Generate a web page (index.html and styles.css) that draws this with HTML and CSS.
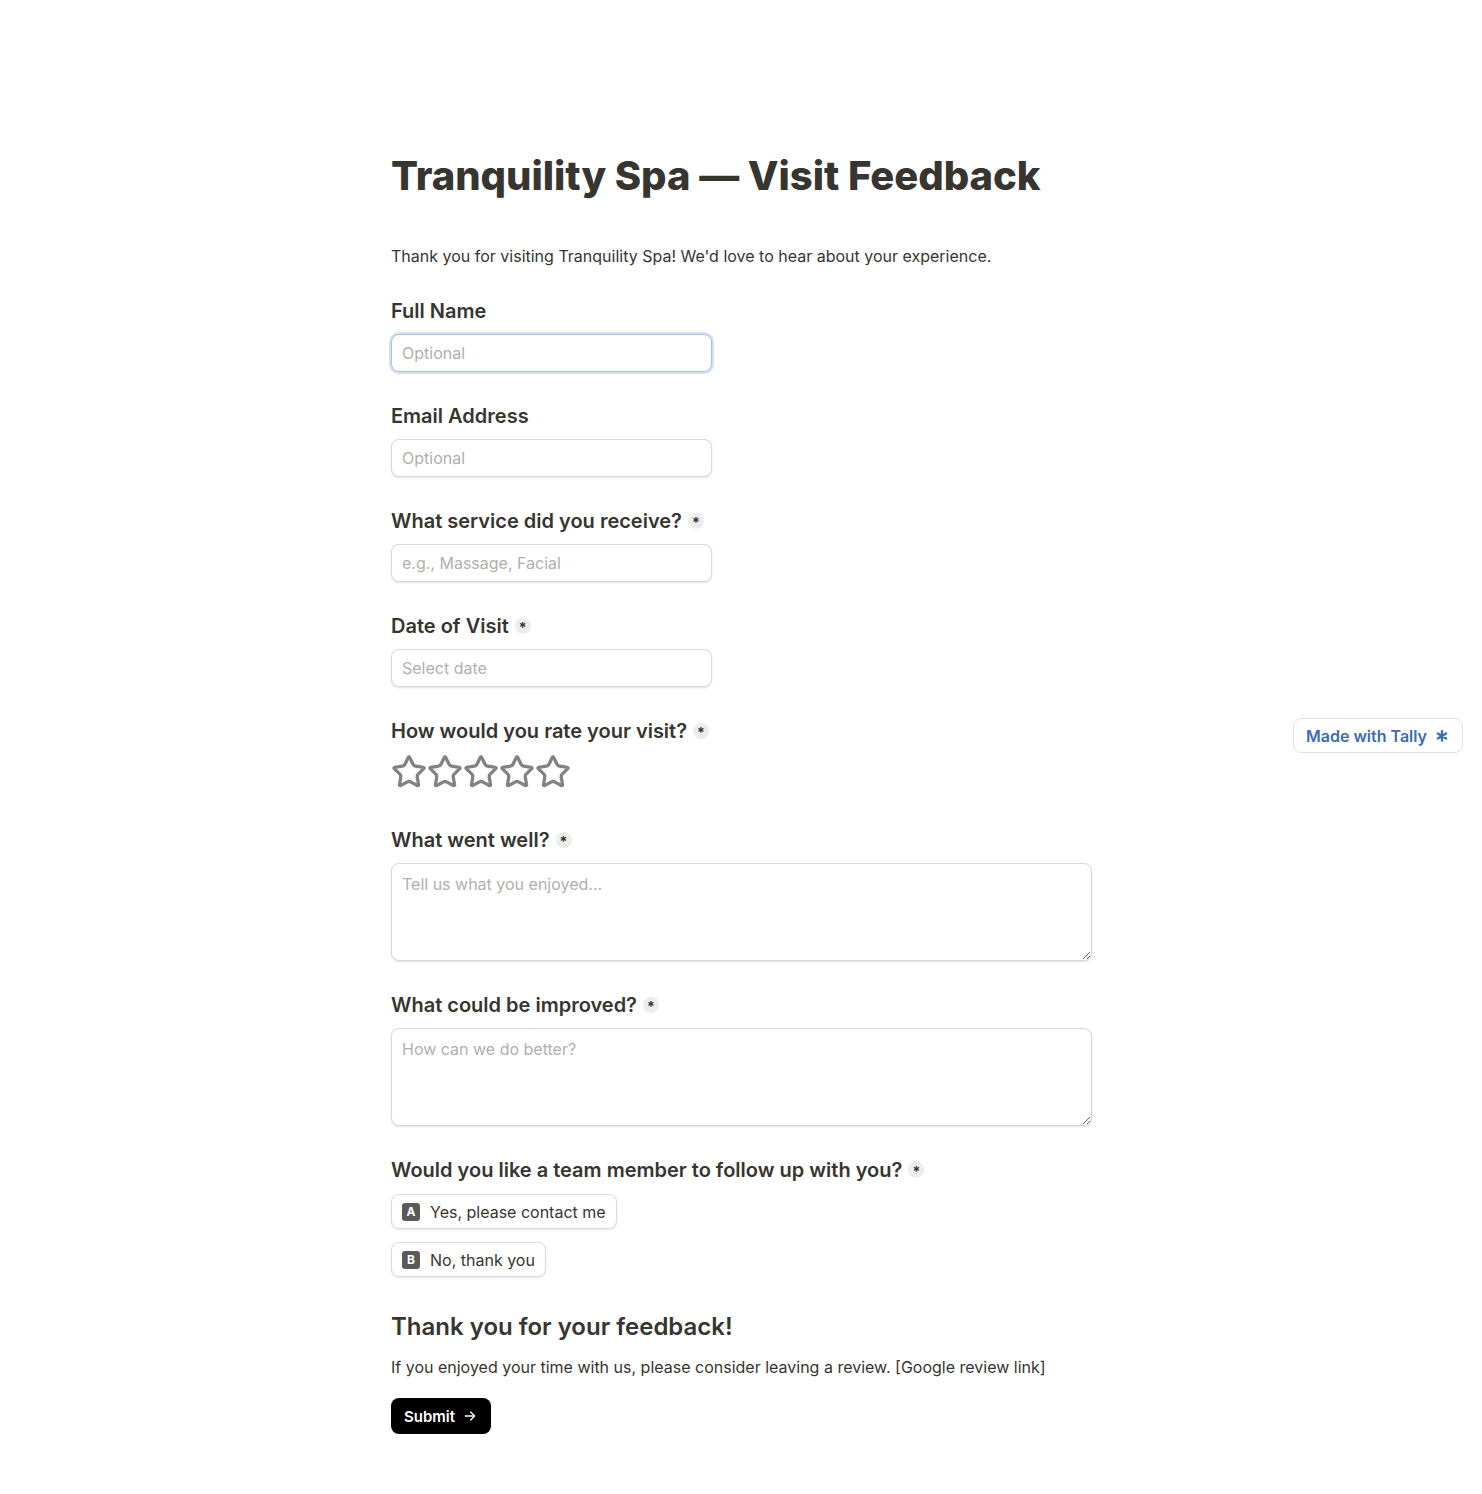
FILE: index.html
```html
<!DOCTYPE html>
<html lang="en">
<head>
<meta charset="utf-8">
<title>Tranquility Spa — Visit Feedback</title>
<link rel="stylesheet" href="styles.css">
</head>
<body>
<main class="form">
  <h1 class="title">Tranquility Spa — Visit Feedback</h1>
  <p class="intro">Thank you for visiting Tranquility Spa! We'd love to hear about your experience.</p>

  <div class="question">
    <label class="label">Full Name</label>
    <input class="input focused" type="text" placeholder="Optional" autofocus>
  </div>

  <div class="question">
    <label class="label">Email Address</label>
    <input class="input" type="text" placeholder="Optional">
  </div>

  <div class="question">
    <label class="label">What service did you receive? <span class="req">*</span></label>
    <input class="input" type="text" placeholder="e.g., Massage, Facial">
  </div>

  <div class="question">
    <label class="label">Date of Visit <span class="req">*</span></label>
    <input class="input" type="text" placeholder="Select date">
  </div>

  <div class="question stars-q">
    <label class="label">How would you rate your visit? <span class="req">*</span></label>
    <div class="stars">
      <svg class="star" viewBox="0 0 24 24"><path d="M11.525 2.295a.53.53 0 0 1 .95 0l2.31 4.679a2.123 2.123 0 0 0 1.595 1.16l5.166.756a.53.53 0 0 1 .294.904l-3.736 3.638a2.123 2.123 0 0 0-.611 1.878l.882 5.14a.53.53 0 0 1-.771.56l-4.618-2.428a2.122 2.122 0 0 0-1.973 0L6.396 21.01a.53.53 0 0 1-.77-.56l.881-5.139a2.122 2.122 0 0 0-.611-1.879L2.16 9.795a.53.53 0 0 1 .294-.906l5.165-.755a2.122 2.122 0 0 0 1.597-1.16z"/></svg>
      <svg class="star" viewBox="0 0 24 24"><path d="M11.525 2.295a.53.53 0 0 1 .95 0l2.31 4.679a2.123 2.123 0 0 0 1.595 1.16l5.166.756a.53.53 0 0 1 .294.904l-3.736 3.638a2.123 2.123 0 0 0-.611 1.878l.882 5.14a.53.53 0 0 1-.771.56l-4.618-2.428a2.122 2.122 0 0 0-1.973 0L6.396 21.01a.53.53 0 0 1-.77-.56l.881-5.139a2.122 2.122 0 0 0-.611-1.879L2.16 9.795a.53.53 0 0 1 .294-.906l5.165-.755a2.122 2.122 0 0 0 1.597-1.16z"/></svg>
      <svg class="star" viewBox="0 0 24 24"><path d="M11.525 2.295a.53.53 0 0 1 .95 0l2.31 4.679a2.123 2.123 0 0 0 1.595 1.16l5.166.756a.53.53 0 0 1 .294.904l-3.736 3.638a2.123 2.123 0 0 0-.611 1.878l.882 5.14a.53.53 0 0 1-.771.56l-4.618-2.428a2.122 2.122 0 0 0-1.973 0L6.396 21.01a.53.53 0 0 1-.77-.56l.881-5.139a2.122 2.122 0 0 0-.611-1.879L2.16 9.795a.53.53 0 0 1 .294-.906l5.165-.755a2.122 2.122 0 0 0 1.597-1.16z"/></svg>
      <svg class="star" viewBox="0 0 24 24"><path d="M11.525 2.295a.53.53 0 0 1 .95 0l2.31 4.679a2.123 2.123 0 0 0 1.595 1.16l5.166.756a.53.53 0 0 1 .294.904l-3.736 3.638a2.123 2.123 0 0 0-.611 1.878l.882 5.14a.53.53 0 0 1-.771.56l-4.618-2.428a2.122 2.122 0 0 0-1.973 0L6.396 21.01a.53.53 0 0 1-.77-.56l.881-5.139a2.122 2.122 0 0 0-.611-1.879L2.16 9.795a.53.53 0 0 1 .294-.906l5.165-.755a2.122 2.122 0 0 0 1.597-1.16z"/></svg>
      <svg class="star" viewBox="0 0 24 24"><path d="M11.525 2.295a.53.53 0 0 1 .95 0l2.31 4.679a2.123 2.123 0 0 0 1.595 1.16l5.166.756a.53.53 0 0 1 .294.904l-3.736 3.638a2.123 2.123 0 0 0-.611 1.878l.882 5.14a.53.53 0 0 1-.771.56l-4.618-2.428a2.122 2.122 0 0 0-1.973 0L6.396 21.01a.53.53 0 0 1-.77-.56l.881-5.139a2.122 2.122 0 0 0-.611-1.879L2.16 9.795a.53.53 0 0 1 .294-.906l5.165-.755a2.122 2.122 0 0 0 1.597-1.16z"/></svg>
    </div>
  </div>

  <div class="question">
    <label class="label">What went well? <span class="req">*</span></label>
    <textarea class="input area" placeholder="Tell us what you enjoyed..."></textarea>
  </div>

  <div class="question">
    <label class="label">What could be improved? <span class="req">*</span></label>
    <textarea class="input area" placeholder="How can we do better?"></textarea>
  </div>

  <div class="question choices-q">
    <label class="label">Would you like a team member to follow up with you? <span class="req">*</span></label>
    <div class="choices">
      <div class="choice"><span class="key">A</span>Yes, please contact me</div>
      <div class="choice"><span class="key">B</span>No, thank you</div>
    </div>
  </div>

  <h2 class="thanks">Thank you for your feedback!</h2>
  <p class="review">If you enjoyed your time with us, please consider leaving a review. [Google review link]</p>

  <button class="submit" type="button">Submit
    <svg class="arrow" viewBox="0 0 24 24"><path d="M5 12h14M13 6l6 6-6 6"/></svg>
  </button>
</main>

<a class="badge" href="#">Made with Tally
  <svg class="badge-icon" viewBox="0 0 16 16"><path d="M8 2.5v11M3.2 5.2l9.6 5.6M12.8 5.2l-9.6 5.6"/></svg>
</a>
</body>
</html>
```

FILE: styles.css
```css
* { box-sizing: border-box; }

html, body {
  margin: 0;
  padding: 0;
  background: #ffffff;
}

body {
  font-family: Inter, "Noto Sans", "Liberation Sans", sans-serif;
  color: #37352f;
}

.form {
  width: 700px;
  margin: 0 auto;
  padding: 152px 0 60px;
}

.title {
  margin: 0;
  font-size: 40px;
  line-height: 48px;
  font-weight: 800;
  letter-spacing: -0.05px;
  color: #37352f;
}

.intro {
  margin: 44px 0 0;
  font-size: 16px;
  line-height: 24px;
}

.question {
  display: flex;
  flex-direction: column;
  align-items: flex-start;
  margin-top: 30px;
}

.question:first-of-type { margin-top: 29px; }

.label {
  display: flex;
  align-items: center;
  font-size: 20px;
  line-height: 28px;
  font-weight: 600;
  margin-bottom: 9px;
}

.req {
  display: inline-flex;
  align-items: center;
  justify-content: center;
  width: 16px;
  height: 16px;
  margin-left: 6px;
  border-radius: 50%;
  background: #ededec;
  font-size: 14px;
  line-height: 1;
  font-weight: 700;
  color: #37352f;
  padding-top: 4px;
}

.input {
  display: block;
  width: 321px;
  height: 38px;
  padding: 0 10px;
  border: 1px solid #d9d9d7;
  border-radius: 8px;
  background: #fff;
  box-shadow: 0 1px 2px rgba(0, 0, 0, 0.12);
  font-family: Inter, "Noto Sans", "Liberation Sans", sans-serif;
  font-size: 16px;
  color: #37352f;
  outline: none;
}

.input::placeholder {
  color: #b1b0ad;
}

.input.focused {
  border-color: #a8c1e6;
  box-shadow: 0 0 0 2px #d6e2f3, 0 1px 2px rgba(0, 0, 0, 0.1);
  caret-color: #37352f;
}

.area {
  width: 701px;
  height: 98px;
  padding: 10px;
  resize: vertical;
  line-height: 20px;
}

.stars-q .label { margin-bottom: 9px; }

.stars {
  display: flex;
  gap: 0;
  margin-bottom: 6px;
}

.star {
  width: 36px;
  height: 36px;
  fill: none;
  stroke: #838280;
  stroke-width: 2.2;
  stroke-linejoin: round;
}

.choices-q .label { margin-bottom: 10px; }

.choices {
  display: flex;
  flex-direction: column;
  align-items: flex-start;
  gap: 13px;
}

.choice {
  display: flex;
  align-items: center;
  height: 35px;
  padding: 0 10px;
  border: 1px solid #dcdcda;
  border-radius: 8px;
  box-shadow: 0 1px 2px rgba(0, 0, 0, 0.1);
  font-size: 16px;
  color: #37352f;
  background: #fff;
}

.key {
  display: inline-flex;
  align-items: center;
  justify-content: center;
  width: 18px;
  height: 18px;
  margin-right: 10px;
  border-radius: 3px;
  background: #5b5a57;
  color: #fff;
  font-size: 12px;
  font-weight: 700;
}

.thanks {
  margin: 34px 0 0;
  font-size: 24px;
  line-height: 32px;
  font-weight: 600;
}

.review {
  margin: 12px 0 0;
  font-size: 16px;
  line-height: 24px;
}

.submit {
  display: inline-flex;
  align-items: center;
  gap: 7px;
  height: 36px;
  margin-top: 19px;
  padding: 0 13px;
  border: none;
  border-radius: 8px;
  background: #000;
  color: #fff;
  font-family: Inter, "Noto Sans", "Liberation Sans", sans-serif;
  font-size: 15px;
  font-weight: 600;
  cursor: pointer;
}

.arrow {
  width: 16px;
  height: 16px;
  fill: none;
  stroke: #fff;
  stroke-width: 2;
  stroke-linecap: round;
  stroke-linejoin: round;
}

.badge {
  position: fixed;
  top: 718px;
  right: 19px;
  display: inline-flex;
  align-items: center;
  gap: 8px;
  height: 35px;
  padding: 0 13px 0 12px;
  border: 1px solid #e2e2e0;
  border-radius: 8px;
  background: #fff;
  color: #3a6db4;
  font-size: 16px;
  font-weight: 600;
  text-decoration: none;
}

.badge-icon {
  width: 14px;
  height: 14px;
  fill: none;
  stroke: #3a6db4;
  stroke-width: 2.6;
  stroke-linecap: round;
}
```
